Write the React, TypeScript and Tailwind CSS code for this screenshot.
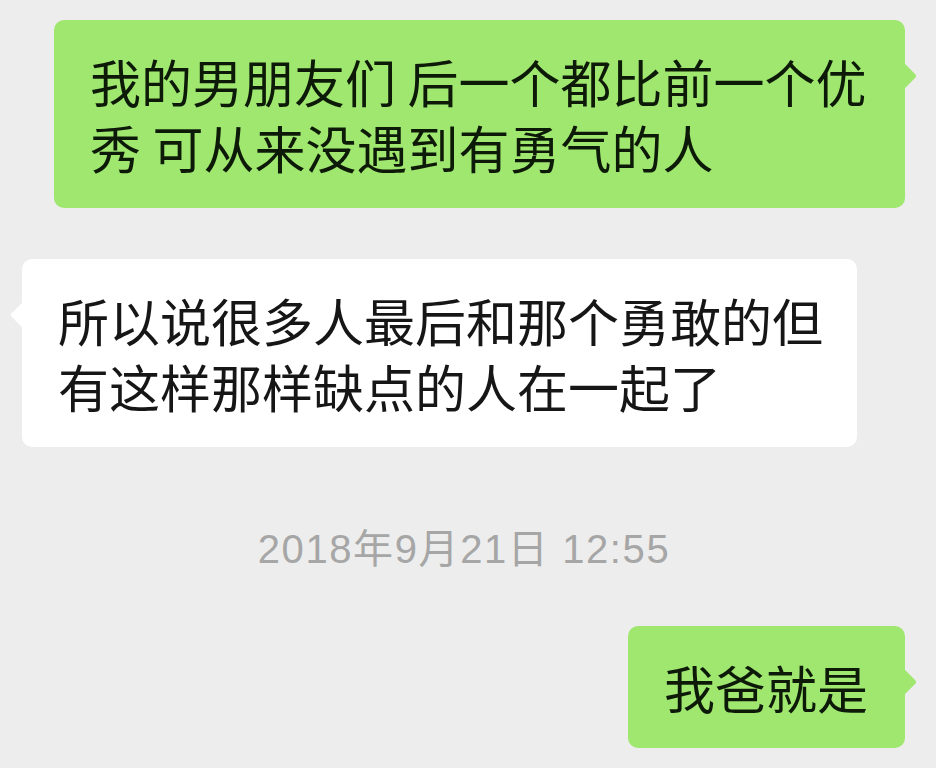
import React from "react";

const cjk = { fontFamily: '"Noto Sans CJK SC", "Noto Sans", sans-serif' };
const stamp = { fontFamily: '"Liberation Sans", "Noto Sans CJK SC", sans-serif' };

type BubbleProps = {
  side: "left" | "right";
  lines: string[];
  className?: string;
};

const Bubble = ({ side, lines, className = "" }: BubbleProps) => {
  const isMe = side === "right";
  return (
    <div
      className={`relative rounded-[10px] px-[36px] py-[28px] ${
        isMe ? "bg-[#a0e770] text-[#0d1a08]" : "bg-white text-[#161616]"
      } ${className}`}
    >
      {/* tail */}
      <div
        className={`absolute top-[46px] h-[20px] w-[20px] rotate-45 rounded-[3px] ${
          isMe ? "right-[-8px] bg-[#a0e770]" : "left-[-8px] bg-white"
        }`}
      />
      <div className="relative text-[51px] leading-[66px] whitespace-nowrap" style={cjk}>
        {lines.map((l) => (
          <div key={l}>{l}</div>
        ))}
      </div>
    </div>
  );
};

export default function App() {
  return (
    <div className="min-h-[768px] w-[936px] overflow-hidden bg-[#ededed] pt-[20px]">
      <div className="flex justify-end pr-[31px]">
        <Bubble
          side="right"
          className="w-[851px]"
          lines={["我的男朋友们 后一个都比前一个优", "秀 可从来没遇到有勇气的人"]}
        />
      </div>

      <div className="mt-[51px] flex justify-start pl-[22px]">
        <Bubble
          side="left"
          className="w-[835px]"
          lines={["所以说很多人最后和那个勇敢的但", "有这样那样缺点的人在一起了"]}
        />
      </div>

      <div
        className="mt-[78px] pr-[8px] text-center text-[40px] leading-[48px] tracking-[1.6px] text-[#a6a6a6]"
        style={stamp}
      >
        2018年9月21日 12:55
      </div>

      <div className="mt-[53px] flex justify-end pr-[31px]">
        <Bubble side="right" className="w-[277px]" lines={["我爸就是"]} />
      </div>
    </div>
  );
}
